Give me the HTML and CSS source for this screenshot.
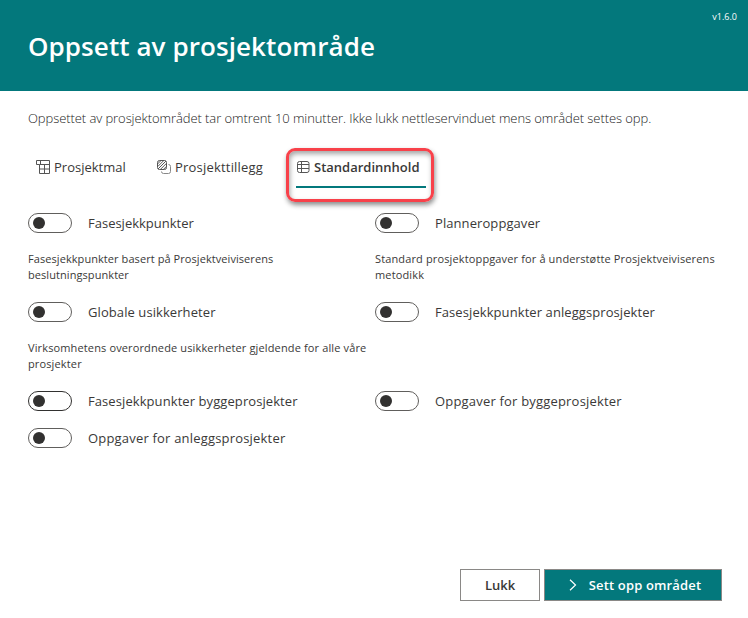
FILE: index.html
```
<!DOCTYPE html>
<html lang="nb">
<head>
<meta charset="utf-8">
<title>Oppsett av prosjektområde</title>
<link rel="stylesheet" href="styles.css">
</head>
<body>
<div class="dialog">
  <header class="header">
    <h1 class="title">Oppsett av prosjektområde</h1>
    <span class="version">v1.6.0</span>
  </header>
  <main class="content">
    <p class="intro">Oppsettet av prosjektområdet tar omtrent 10 minutter. Ikke lukk nettleservinduet mens området settes opp.</p>
    <nav class="tabs">
      <button class="tab tab-template">
        <svg class="icon" viewBox="0 0 14 14"><path d="M.5.5h13v13h-10v-9h-3zM3.500 4.500h10M3.500 9h10M8.500 4.500v9M4.500.5v4"/></svg>
        <span>Prosjektmal</span>
      </button>
      <button class="tab tab-addon">
        <svg class="icon" viewBox="0 0 14 14"><rect x=".5" y=".5" width="9" height="9" rx="2"/><path d="M.5 4l3.500-3.500M.8 6.500l6-6M1 9l8-8M3.500 9.300l6-6M6.500 9.300l3-3"/><path class="back" d="M11.500 4.500q2 0 2 2v5q0 2-2 2h-5q-2 0-2-2"/></svg>
        <span>Prosjekttillegg</span>
      </button>
      <div class="highlight">
        <button class="tab tab-selected">
          <svg class="icon" viewBox="0 0 14 14"><rect x="1.500" y="1.500" width="11.500" height="11" rx="2"/><path d="M5.500 1.500v11M1.500 4.500h11.500M1.500 8.500h11.500"/></svg>
          <span>Standardinnhold</span>
        </button>
      </div>
    </nav>
    <div class="grid">
      <div class="option">
        <label class="row"><span class="toggle"></span><span class="label label-compact">Fasesjekkpunkter</span></label>
        <p class="desc desc-compact">Fasesjekkpunkter basert på Prosjektveiviserens<br>beslutningspunkter</p>
      </div>
      <div class="option">
        <label class="row"><span class="toggle"></span><span class="label">Planneroppgaver</span></label>
        <p class="desc">Standard prosjektoppgaver for å understøtte Prosjektveiviserens<br>metodikk</p>
      </div>
      <div class="option">
        <label class="row"><span class="toggle"></span><span class="label">Globale usikkerheter</span></label>
        <p class="desc">Virksomhetens overordnede usikkerheter gjeldende for alle våre<br>prosjekter</p>
      </div>
      <div class="option">
        <label class="row"><span class="toggle"></span><span class="label">Fasesjekkpunkter anleggsprosjekter</span></label>
      </div>
      <div class="option">
        <label class="row"><span class="toggle toggle-hover"></span><span class="label">Fasesjekkpunkter byggeprosjekter</span></label>
      </div>
      <div class="option">
        <label class="row"><span class="toggle"></span><span class="label label-wide">Oppgaver for byggeprosjekter</span></label>
      </div>
      <div class="option">
        <label class="row"><span class="toggle"></span><span class="label label-wide">Oppgaver for anleggsprosjekter</span></label>
      </div>
    </div>
  </main>
  <footer class="footer">
    <button class="button">Lukk</button>
    <button class="button button-primary"><svg class="chevron" viewBox="0 0 8 12"><path d="M1 .8l5.500 5.200L1 11.200"/></svg><span>Sett opp området</span></button>
  </footer>
</div>
</body>
</html>
```
FILE: styles.css
```
* { box-sizing: border-box; }
body { margin: 0; background: #fff; color: #3a3938; font-family: "Open Sans", "Noto Sans", sans-serif; }
button { font: inherit; color: inherit; letter-spacing: inherit; background: none; border: 0; padding: 0; }
h1, p { margin: 0; }
.dialog { height: 618px; display: flex; flex-direction: column; }
.header { height: 91px; flex: none; background: #03787c; color: #fff; padding: 11px 11px 0 28px; display: flex; justify-content: space-between; }
.title { font-size: 26px; font-weight: 600; line-height: 36px; padding-top: 17px; letter-spacing: .08px; }
.version { font-size: 9px; line-height: 12px; }
.content { padding: 17px 28px 0; }
.intro { font-size: 13px; font-weight: 300; line-height: 20px; letter-spacing: -.075px; white-space: nowrap; color: #222; }
.tabs { display: flex; height: 57px; margin-top: 19px; align-items: flex-start; }
.tab { display: flex; align-items: center; gap: 4px; height: 39px; font-size: 13px; white-space: nowrap; }
.tab-template { margin-left: 8px; width: 121px; }
.tab-addon { width: 129px; letter-spacing: .2px; }
.icon { width: 14px; height: 14px; flex: none; fill: none; stroke: #555; stroke-width: 1; }
.back { stroke: #888; }
.highlight { width: 148px; height: 54px; margin-top: 1px; border: 3px solid #f8414a; border-radius: 9px; padding: 0 7px; box-shadow: 1px 3px 5px rgba(0,0,0,.45), inset 1px 3px 5px rgba(0,0,0,.35); }
.tab-selected { width: 130px; height: 37px; padding-bottom: 4px; font-weight: 600; border-bottom: 2px solid #03787c; }
.grid { display: grid; grid-template-columns: 347px 345px; }
.row { display: flex; align-items: center; height: 37px; gap: 16px; }
.toggle { width: 44px; height: 20px; border: 1px solid #605e5c; border-radius: 10px; display: flex; align-items: center; padding-left: 3.5px; }
.toggle::before { content: ""; width: 12px; height: 12px; border-radius: 50%; background: #323130; }
.toggle-hover { border-color: #323130; }
.label { font-size: 13px; letter-spacing: .08px; white-space: nowrap; }
.label-compact { letter-spacing: 0; }
.label-wide { letter-spacing: .19px; }
.desc { font-size: 11px; line-height: 16px; padding: 10px 0 10px; letter-spacing: .135px; white-space: nowrap; }
.desc-compact { letter-spacing: .07px; }
.footer { margin-top: auto; padding: 0 26px 17px; display: flex; justify-content: flex-end; gap: 4px; font-size: 13px; font-weight: 600; }
.button { width: 80px; height: 32px; border: 1px solid #8a8886; display: flex; align-items: center; justify-content: center; }
.button-primary { width: 178px; padding-left: 4px; background: #03787c; color: #fff; gap: 12px; letter-spacing: .15px; }
.chevron { width: 8px; height: 12px; fill: none; stroke: #fff; stroke-width: 1.2; }
```
